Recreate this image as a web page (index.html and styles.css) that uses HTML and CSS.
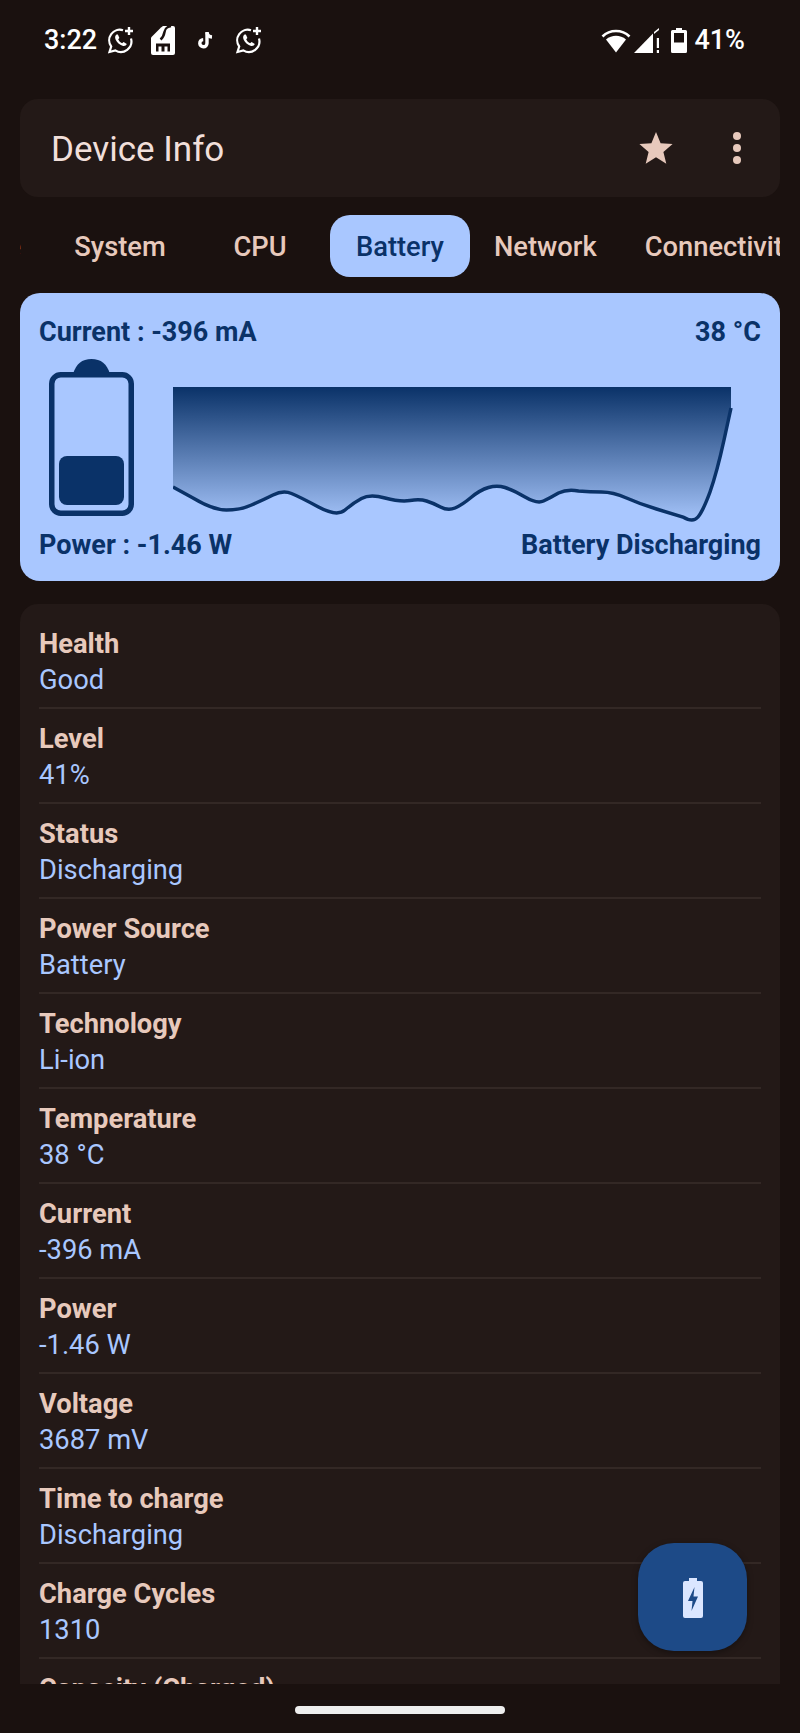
FILE: index.html
```html
<!doctype html>
<html>
<head>
<meta charset="utf-8">
<meta name="viewport" content="width=device-width,user-scalable=no" />
<title>Device Info</title>
<link rel="stylesheet" href="styles.css">
</head>
<body>
<div id="screen">
	<div class="status">
		<div class="status-left">
			<span class="time">3:22</span>
			<svg class="ic-wa" viewBox="0 0 28 28">
				<path class="wa-line" d="M16 4.2A10.6 10.6 0 0 0 4.200 20.500L2.500 26l5.800-1.600A10.600 10.600 0 0 0 24 12.500"/>
				<path class="wa-plus" d="M22 1v8M18 5h8"/>
				<path class="wa-fill" d="M9.500 8.500c-1.500 1-1.800 3-.8 5.200 1.400 3 3.800 5 6.800 6 2 .6 3.700 0 4.300-1.700l-3.200-2-1.500 1.300c-1.800-.8-3.100-2.200-3.900-4l1.200-1.400-1.500-3.400z"/>
			</svg>
			<svg class="ic-sim" viewBox="0 0 24 29">
				<path class="sim-body" d="M2 29a2 2 0 0 1-2-2V11.500L10 1.500 12 0h10a2 2 0 0 1 2 2v25a2 2 0 0 1-2 2z"/>
				<path class="sim-cut" d="M20 0c-5 1-6 3-6.500 6-.5 3-1 5-4 7.500"/>
				<path class="sim-cut" d="M5 17.500h14v8h-2.500v-5h-3v5h-3v-5h-3v5H5z"/>
			</svg>
			<svg class="ic-tt" viewBox="0 0 18 18">
				<path class="tt-line" d="M10 1v11.200a3.600 3.600 0 1 1-3.800-3.600"/>
				<path class="tt-line" d="M10 1.500c.4 2.600 2.300 4.300 5 4.500"/>
			</svg>
			<svg class="ic-wa" viewBox="0 0 28 28">
				<path class="wa-line" d="M16 4.2A10.6 10.6 0 0 0 4.200 20.500L2.500 26l5.800-1.600A10.600 10.600 0 0 0 24 12.500"/>
				<path class="wa-plus" d="M22 1v8M18 5h8"/>
				<path class="wa-fill" d="M9.500 8.500c-1.500 1-1.800 3-.8 5.200 1.400 3 3.800 5 6.800 6 2 .6 3.700 0 4.300-1.700l-3.200-2-1.500 1.300c-1.800-.8-3.100-2.200-3.900-4l1.200-1.400-1.500-3.400z"/>
			</svg>
		</div>
		<div class="status-right">
			<svg class="ic-wifi" viewBox="0 0 30 25">
				<path class="wifi-arc" d="M1.500 8.500C9 1.200 21 1.200 28.500 8.500"/>
				<path class="wifi-fan" d="M5 11.500c5.800-5 14.200-5 20 0L15 24.500z"/>
			</svg>
			<svg class="ic-signal" viewBox="0 0 26 25">
				<path class="sig-fill" d="M0 25 19 5.500V25z"/>
				<path class="sig-fill" d="M20 4 25 0v2l-5 4zM22.800 10h2.200v10h-2.200zM22.800 22h2.200v3h-2.200z"/>
			</svg>
			<svg class="ic-batt" viewBox="0 0 16 25">
				<path class="sig-fill" d="M5 0h6v2h3.500A1.500 1.500 0 0 1 16 3.500v20a1.500 1.500 0 0 1-1.500 1.500h-13A1.500 1.500 0 0 1 0 23.500v-20A1.500 1.500 0 0 1 1.500 2H5z"/>
				<rect class="batt-window" x="3" y="5" width="10" height="9.500"/>
			</svg>
			<span class="pct">41%</span>
		</div>
	</div>

	<div class="appbar">
		<span class="app-title">Device Info</span>
		<svg class="ic-star" viewBox="0 0 34 34">
			<path d="M17 1l4.600 11.200 12 .9-9.200 7.800 2.900 11.800L17 26.300 6.700 32.700l2.900-11.800L.4 13.100l12-.9z"/>
		</svg>
		<div class="dots"><i></i><i></i><i></i></div>
	</div>

	<div class="tabs">
		<a class="tab first">Device</a>
		<a class="tab">System</a>
		<a class="tab">CPU</a>
		<a class="tab active">Battery</a>
		<a class="tab">Network</a>
		<a class="tab">Connectivity</a>
	</div>

	<div class="scroll">
		<div class="hero">
			<div class="hero-row">
				<span>Current : -396 mA</span>
				<span>38 °C</span>
			</div>
			<div class="hero-mid">
				<svg class="hero-batt" viewBox="0 0 85 158">
					<path class="batt-nub" d="M24 16C27 6 33 1 42.500 1S58 6 61 16z"/>
					<rect class="batt-outline" x="2.750" y="16.750" width="79.500" height="138.500" rx="9"/>
					<rect class="batt-level" x="10" y="98" width="65" height="49" rx="8"/>
				</svg>
				<svg class="hero-chart" viewBox="0 0 560 136">
					<defs>
						<linearGradient id="fade" x1="0" y1="0" x2="0" y2="1">
							<stop offset="0" stop-color="#0a3268"/>
							<stop offset="1" stop-color="#a4c3f9"/>
						</linearGradient>
					</defs>
					<path class="chart-area" d="M0 100L20 111Q40 123 53.500 123Q67 123 78.500 118Q90 113 100 108Q110 103 118.500 106.500Q127 110 145.500 120Q164 130 172 123Q180 116 188.500 111.500Q197 107 212 111Q227 115 237 113.500Q247 112 253.500 114Q260 116 267.500 120Q275 124 282 121Q289 118 298 110.500Q307 103 315.500 100.500Q324 98 332 100.500Q340 103 352 110Q364 117 370.500 114Q377 111 385.500 106Q394 102 405.500 104Q417 105 428.500 105Q440 105 453.500 111Q467 117 483.500 122Q500 127 510 130Q520 136 525 130Q530 124 537 105Q544 85 551 53L558 21V0H0z"/>
					<path class="chart-line" d="M0 100L20 111Q40 123 53.500 123Q67 123 78.500 118Q90 113 100 108Q110 103 118.500 106.500Q127 110 145.500 120Q164 130 172 123Q180 116 188.500 111.500Q197 107 212 111Q227 115 237 113.500Q247 112 253.500 114Q260 116 267.500 120Q275 124 282 121Q289 118 298 110.500Q307 103 315.500 100.500Q324 98 332 100.500Q340 103 352 110Q364 117 370.500 114Q377 111 385.500 106Q394 102 405.500 104Q417 105 428.500 105Q440 105 453.500 111Q467 117 483.500 122Q500 127 510 130Q520 136 525 130Q530 124 537 105Q544 85 551 53L558 21"/>
				</svg>
			</div>
			<div class="hero-row">
				<span>Power : -1.46 W</span>
				<span>Battery Discharging</span>
			</div>
		</div>

		<div class="info">
			<div class="row"><div class="k">Health</div><div class="v">Good</div></div>
			<div class="row"><div class="k">Level</div><div class="v">41%</div></div>
			<div class="row"><div class="k">Status</div><div class="v">Discharging</div></div>
			<div class="row"><div class="k">Power Source</div><div class="v">Battery</div></div>
			<div class="row"><div class="k">Technology</div><div class="v">Li-ion</div></div>
			<div class="row"><div class="k">Temperature</div><div class="v">38 °C</div></div>
			<div class="row"><div class="k">Current</div><div class="v">-396 mA</div></div>
			<div class="row"><div class="k">Power</div><div class="v">-1.46 W</div></div>
			<div class="row"><div class="k">Voltage</div><div class="v">3687 mV</div></div>
			<div class="row"><div class="k">Time to charge</div><div class="v">Discharging</div></div>
			<div class="row"><div class="k">Charge Cycles</div><div class="v">1310</div></div>
			<div class="row"><div class="k">Capacity (Charged)</div></div>
		</div>
	</div>

	<div class="navbar"><div class="home"></div></div>

	<div class="fab">
		<svg class="ic-fab" viewBox="0 0 20 40">
			<path class="fab-batt" d="M6 0h8v3h4a2 2 0 0 1 2 2v33a2 2 0 0 1-2 2H2a2 2 0 0 1-2-2V5a2 2 0 0 1 2-2h4z"/>
			<path class="fab-bolt" d="M11.500 9 5 23h4.500L8.500 33 15 18.500h-4.500z"/>
		</svg>
	</div>
</div>
</body>
</html>
```

FILE: styles.css
```css
body {
	margin: 0;
	background: #1a110f;
	font-family: Roboto, "Noto Sans", sans-serif;
}
#screen {
	width: 800px;
	height: 1733px;
	position: relative;
	display: flex;
	flex-direction: column;
	overflow: hidden;
}

/* status bar */
.status {
	height: 99px;
	flex-shrink: 0;
	box-sizing: border-box;
	padding: 25px 55px 0 44px;
	display: flex;
	justify-content: space-between;
	align-items: flex-start;
	color: #fff;
}
.status-left,
.status-right {
	display: flex;
	align-items: center;
	height: 30px;
}
.time {
	font-size: 27px;
	font-weight: 500;
	width: 63px;
}
.pct {
	font-size: 27px;
	font-weight: 500;
	margin-left: 7px;
}
.ic-wa {
	width: 28px;
	height: 28px;
}
.ic-sim {
	width: 24px;
	height: 29px;
	margin-left: 16px;
}
.ic-tt {
	width: 18px;
	height: 18px;
	margin: 0 20px 0 22px;
}
.wa-line {
	fill: none;
	stroke: #fff;
	stroke-width: 2.2;
}
.wa-plus {
	fill: none;
	stroke: #fff;
	stroke-width: 2.400;
}
.wa-fill,
.sim-body {
	fill: #fff;
}
.sim-cut {
	fill: #1a110f;
}
.sim-cut:nth-child(2) {
	fill: none;
	stroke: #1a110f;
	stroke-width: 2.500;
}
.tt-line {
	fill: none;
	stroke: #fff;
	stroke-width: 3.400;
}
.ic-wifi {
	width: 30px;
	height: 25px;
}
.ic-signal {
	width: 26px;
	height: 25px;
	margin-left: 3px;
}
.ic-batt {
	width: 16px;
	height: 25px;
	margin-left: 11px;
}
.wifi-arc {
	fill: none;
	stroke: #fff;
	stroke-width: 2.600;
}
.wifi-fan,
.sig-fill {
	fill: #fff;
}
.batt-window {
	fill: #1a110f;
}

/* app bar */
.appbar {
	height: 98px;
	flex-shrink: 0;
	margin: 0 20px;
	padding: 0 39px 0 31px;
	background: #231917;
	border-radius: 18px;
	display: flex;
	align-items: center;
}
.app-title {
	flex: 1;
	font-size: 35px;
	color: #f1dfda;
	padding-top: 2px;
}
.ic-star {
	width: 34px;
	height: 34px;
	fill: #e7c9bc;
	margin-right: 60px;
}
.dots {
	display: flex;
	flex-direction: column;
	gap: 4px;
}
.dots i {
	display: block;
	width: 8px;
	height: 8px;
	border-radius: 50%;
	background: #e7c9bc;
}

/* tabs */
.tabs {
	height: 62px;
	flex-shrink: 0;
	margin: 18px 20px 16px;
	display: flex;
	overflow: hidden;
}
.tab {
	flex-shrink: 0;
	min-width: 92px;
	padding: 0 24px;
	line-height: 64px;
	text-align: center;
	font-size: 27.300px;
	font-weight: 500;
	color: #e7c9bc;
	border-radius: 20px;
}
.tab.first {
	margin-left: -110px;
}
.tab.active {
	background: #a9c7ff;
	color: #0a3268;
}

/* scrolling content */
.scroll {
	flex: 1;
	min-height: 0;
	overflow: hidden;
	padding: 0 20px;
}
.hero {
	height: 288px;
	box-sizing: border-box;
	padding: 23px 19px 0;
	background: #a9c7ff;
	border-radius: 20px;
	color: #0a3268;
}
.hero-row {
	display: flex;
	justify-content: space-between;
	font-size: 27px;
	font-weight: 700;
	line-height: 32px;
}
.hero-mid {
	display: flex;
	align-items: flex-start;
	height: 173px;
	margin-top: 10px;
	margin-bottom: -2px;
}
.hero-batt {
	width: 85px;
	height: 158px;
	margin-left: 10px;
}
.hero-chart {
	width: 560px;
	height: 136px;
	margin: 29px 0 0 39px;
}
.batt-nub,
.batt-level {
	fill: #0a3268;
}
.batt-outline {
	fill: none;
	stroke: #0a3268;
	stroke-width: 5.500;
}
.chart-area {
	fill: url(#fade);
}
.chart-line {
	fill: none;
	stroke: #0a3268;
	stroke-width: 3.500;
}

/* info list */
.info {
	margin-top: 23px;
	padding: 10px 19px 0;
	background: #231917;
	border-radius: 18px 18px 0 0;
}
.row {
	height: 95px;
	box-sizing: border-box;
	padding-top: 12px;
	border-bottom: 2px solid #332825;
}
.row:last-child {
	border-bottom: 0;
}
.k {
	font-size: 27.300px;
	font-weight: 700;
	line-height: 36px;
	color: #e7c9bc;
}
.v {
	font-size: 27.300px;
	line-height: 36px;
	color: #a9c7ff;
}

/* bottom */
.navbar {
	height: 49px;
	flex-shrink: 0;
	display: flex;
	justify-content: center;
	padding-top: 22px;
	box-sizing: border-box;
}
.home {
	width: 210px;
	height: 8px;
	border-radius: 4px;
	background: #eeeeee;
}
.fab {
	position: absolute;
	left: 638px;
	top: 1543px;
	width: 109px;
	height: 108px;
	border-radius: 36px;
	background: #1d4a87;
	box-shadow: 0 2px 6px rgba(0,0,0,.35);
	display: flex;
	align-items: center;
	justify-content: center;
}
.ic-fab {
	width: 20px;
	height: 40px;
	margin-top: 1px;
}
.fab-batt {
	fill: #dbe6ff;
}
.fab-bolt {
	fill: #1d4a87;
}
```
